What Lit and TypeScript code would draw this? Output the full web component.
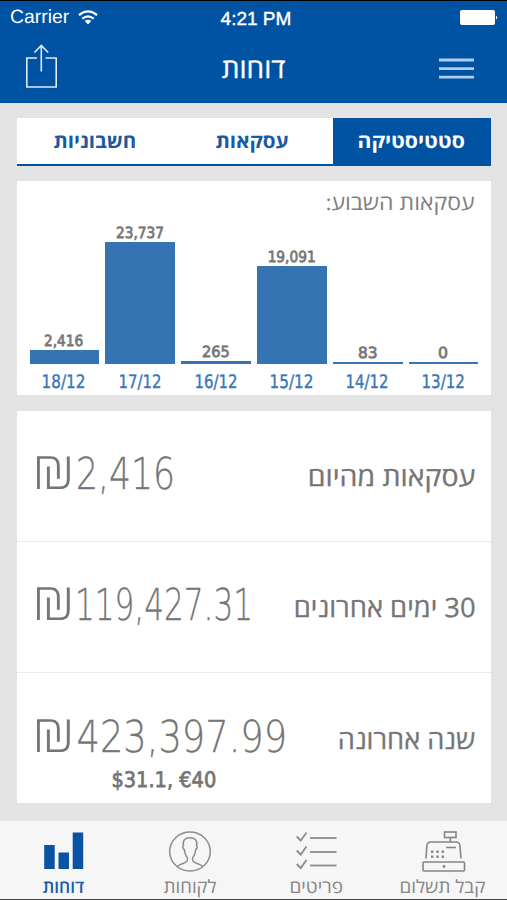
import { LitElement, html, css, svg } from "lit";
import { customElement, property } from "lit/decorators.js";
import { styleMap } from "lit/directives/style-map.js";

const pen = document.createElement("canvas").getContext("2d")!;

/** One line of text, fitted to a box that runs from the letter tops to the baseline. */
@customElement("fit-text")
class FitText extends LitElement {
  @property() text = "";
  @property() face = '"Open Sans", "Liberation Sans", sans-serif';
  @property() probe = "ה";
  @property({ type: Number }) weight = 400;
  @property({ type: Number }) w = 50;
  @property({ type: Number }) h = 12;

  static styles = css`
    :host { display: block; flex: none; direction: ltr; text-align: left; }
    .box { display: block; }
    .ink { display: inline-block; vertical-align: top; white-space: pre; transform-origin: 0 0; text-rendering: geometricPrecision; }
  `;

  render() {
    const rtl = /[\u0590-\u05ff]/.test(this.text);
    pen.direction = rtl ? "rtl" : "ltr";
    pen.textAlign = "left";
    pen.font = `${this.weight} 100px ${this.face}`;
    const size = (this.h * 100) / pen.measureText(this.probe).actualBoundingBoxAscent;
    const m = pen.measureText(this.text);
    const k = size / 100;
    const left = -m.actualBoundingBoxLeft * k;
    const ink = (m.actualBoundingBoxRight + m.actualBoundingBoxLeft) * k;
    const sx = this.w / ink;
    const base = this.h / 2 + ((m.fontBoundingBoxAscent - m.fontBoundingBoxDescent) * k) / 2;
    const box = { width: `${this.w}px`, height: `${this.h}px` };
    const inkStyle = {
      direction: rtl ? "rtl" : "ltr",
      font: `${this.weight} ${size}px/${this.h}px ${this.face}`,
      transform: `translate(${-left * sx}px, ${this.h - base}px) scaleX(${sx})`,
    };
    return html`<span class="box" style=${styleMap(box)}><span class="ink" style=${styleMap(inkStyle)}>${this.text}</span></span>`;
  }
}

const LATIN = '"Liberation Sans", sans-serif';
const NUM = '"DejaVu Sans", sans-serif';
const SHEKEL = 'Inter, "Open Sans", sans-serif';

const bars = [
  { value: "2,416", vw: 37.5, day: "18/12", dw: 41, height: 13.5 },
  { value: "23,737", vw: 46, day: "17/12", dw: 40, height: 121.5 },
  { value: "265", vw: 25.5, day: "16/12", dw: 40, height: 3 },
  { value: "19,091", vw: 45.5, day: "15/12", dw: 41, height: 98 },
  { value: "83", vw: 17.5, day: "14/12", dw: 40, height: 1.6 },
  { value: "0", vw: 8, day: "13/12", dw: 40.5, height: 1.6 },
];

const totals = [
  { amount: "2,416", aw: 94, label: "עסקאות מהיום", lw: 164.5, extra: "" },
  { amount: "119,427.31", aw: 171.5, label: "30 ימים אחרונים", lw: 178.5, extra: "" },
  { amount: "423,397.99", aw: 206, label: "שנה אחרונה", lw: 134.5, extra: "$31.1, €40" },
];

const chartIcon = svg`<g fill="#0a52a3"><rect x="2.200" y="13" width="10.5" height="24"/><rect x="16.500" y="20.5" width="10.5" height="16.5"/><rect x="30.700" y="0.5" width="10.5" height="36.5"/></g>`;
const personIcon = svg`<g fill="none" stroke="#8d8d8d" stroke-width="1.5"><ellipse cx="21" cy="19.500" rx="20.300" ry="19.500"/>
  <path d="M8.5 34.500C9.5 32 17 32 18.300 28.500C18.900 27 18.600 25.500 17.300 24C15.800 22 15.700 19.500 15.300 17.500C13.600 16.700 13.400 14.500 14.400 13.700C13.400 8.500 16 5.800 21 5.800S28.600 8.500 27.600 13.700C28.600 14.500 28.400 16.700 26.700 17.500C26.300 19.500 26.200 22 24.700 24C23.400 25.500 23.100 27 23.700 28.500C25 32 32.500 32 33.500 34.500"/></g>`;
const listIcon = svg`<g fill="none" stroke="#8d8d8d" stroke-width="1.8">
  ${[0, 14, 27.5].map((y) => svg`<path d=${`M1.700 ${y + 4.5}L5.700 ${y + 8.5}L11.500 ${y + 0.5}`}/><path d=${`M15 ${y + 6}H41.500`}/>`)}</g>`;
const tillIcon = svg`<g fill="none" stroke="#858585" stroke-width="1.6"><rect x="22.500" y="0" width="11.500" height="5.500"/><path d="M28.300 5.500V9.800"/>
  <path d="M4 26.500L4.800 14Q5.200 10 9 10H34Q37.600 10 38 14L39 26.500"/><rect x="1" y="30" width="41.500" height="9" rx="1"/><path d="M24 15.500H34"/></g>
  <g fill="#858585">${[18.500, 23.500].map((y) => [9, 14.300, 19.600].map((x) => svg`<rect x=${x} y=${y} width="2.400" height="2.400"/>`))}<circle cx="22" cy="34.500" r="1.400"/></g>`;

const nav = [
  { label: "דוחות", lw: 41, icon: chartIcon, active: true },
  { label: "לקוחות", lw: 52, icon: personIcon, active: false },
  { label: "פריטים", lw: 51, icon: listIcon, active: false },
  { label: "קבל תשלום", lw: 84, icon: tillIcon, active: false },
];

@customElement("app-root")
class AppRoot extends LitElement {
  static styles = css`
    * { box-sizing: border-box; }
    :host { display: flex; flex-direction: column; width: 507px; height: 900px; overflow: hidden; background: #e3e3e3; color: #757575; }
    svg { display: block; flex: none; overflow: visible; }
    .head { height: 102.5px; flex: none; background: #0052a2; border-top: 1.5px solid #000; color: #fff; }
    .status { display: grid; grid-template-columns: 1fr auto 1fr; height: 24px; padding: 8px 9px 0 11px; align-items: start; }
    .carrier { display: flex; gap: 9px; align-items: start; }
    .carrier fit-text { margin-top: 2px; }
    .carrier svg { margin-top: 1px; }
    .clock { margin-top: 2.500px; -webkit-text-stroke: 0.4px #fff; margin-right: -1px; }
    .battery { justify-self: end; margin-top: 0.5px; }
    .bar { display: flex; justify-content: space-between; align-items: flex-start; padding: 18px 33px 0 25px; }
    .bar .share { margin-top: 1px; }
    .bar .title { margin: 18.500px 0 0 10px; -webkit-text-stroke: 0.3px #fff; }
    .bar .menu { margin-top: 14.500px; }
    .tabs { display: grid; grid-template-columns: 158px 158px 158px; height: 47.5px; margin: 15.5px 16px 0 17px; flex: none; background: #fff; border-bottom: 2.5px solid #0052a2; color: #1a5aa3; }
    .tab { display: flex; justify-content: center; padding: 18px 3.500px 0 0; }
    .tab.on { background: #0052a2; color: #fff; padding-right: 1px; }
    .card { margin: 15.5px 16px 0 17px; flex: none; background: #fff; }
    .chart { height: 214px; padding: 16px 12.500px 0; display: flex; flex-direction: column; }
    .chart .caption { align-self: flex-end; margin-right: 4.500px; color: #808080; }
    .bars { display: grid; grid-template-columns: repeat(6, 69.500px); column-gap: 6.400px; height: 153px; align-items: end; }
    .col { display: flex; flex-direction: column; align-items: center; color: #777; -webkit-text-stroke: 0.8px #777; }
    .col fit-text, .days fit-text { margin-right: 1px; }
    .fill { width: 100%; margin-top: 2.500px; background: #3474b3; }
    .days { display: grid; grid-template-columns: repeat(6, 69.500px); column-gap: 6.400px; justify-items: center; margin-top: 11.500px; color: #3776b8; -webkit-text-stroke: 0.4px #3776b8; }
    .totals { height: 392.500px; margin-bottom: 18px; }
    .row { display: flex; justify-content: space-between; align-items: flex-start; height: 131.300px; padding: 46.500px 17px 0 20px; border-bottom: 1px solid #ebebeb; }
    .row:last-child { border: 0; }
    .row .name { margin-top: 13px; -webkit-text-stroke: 0.3px #757575; }
    .sum { display: flex; flex-direction: column; align-items: flex-start; }
    .money { display: flex; gap: 7.500px; -webkit-text-stroke: 0.3px #757575; }
    .money .sign { -webkit-text-stroke: 0; }
    .extra { margin: 19.500px 0 0 76px; -webkit-text-stroke: 0.8px #757575; }
    .nav { flex: 1; display: grid; grid-template-columns: repeat(4, 126.500px); background: #f6f6f6; border-bottom: 1.500px solid #444; color: #858585; }
    .item { display: flex; flex-direction: column; align-items: center; gap: 9.500px; padding-top: 11px; }
    .item.on { color: #1a5cab; }
  `;

  render() {
    return html`
      <div class="head">
        <div class="status">
          <div class="carrier">
            <fit-text text="Carrier" .face=${LATIN} probe="C" w="58" h="13.5"></fit-text>
            <svg width="20" height="15" viewBox="0 0 20 15"><g fill="none" stroke="#fff" stroke-width="2.300"><path d="M1 5.200Q10 -2.400 19 5.200"/><path d="M4.300 8.700Q10 4 15.700 8.700"/></g><path d="M6.700 11Q10 8.300 13.300 11L10 14.500Z" fill="#fff"/></svg>
          </div>
          <fit-text class="clock" text="4:21 PM" .face=${LATIN} probe="P" w="69" h="13"></fit-text>
          <svg class="battery" width="38" height="15" viewBox="0 0 38 15"><rect width="35" height="15" rx="2" fill="#fff"/><path d="M36 5.500Q38.500 7.500 36 9.500Z" fill="#fff"/></svg>
        </div>
        <div class="bar">
          <svg class="share" width="32" height="45" viewBox="0 0 32 45"><g fill="none" stroke="#dfeafa" stroke-width="1.600"><path d="M12 14H1.800V43H31.200V14H20.500"/><path d="M16.300 27.500V2M9.500 8.500L16.300 1.500L23.200 8.500"/></g></svg>
          <fit-text class="title" text="דוחות" w="63" h="17.5"></fit-text>
          <svg class="menu" width="35" height="22" viewBox="0 0 35 22"><path d="M0 2H35M0 10.600H35M0 19.200H35" stroke="#b3cdf0" stroke-width="2.800"/></svg>
        </div>
      </div>
      <div class="tabs">
        <div class="tab"><fit-text text="חשבוניות" weight="700" w="81" h="12.5"></fit-text></div>
        <div class="tab"><fit-text text="עסקאות" weight="700" w="72" h="12.5"></fit-text></div>
        <div class="tab on"><fit-text text="סטטיסטיקה" weight="700" w="105" h="12.5"></fit-text></div>
      </div>
      <div class="card chart">
        <fit-text class="caption" text="עסקאות השבוע:" w="147" h="13.5"></fit-text>
        <div class="bars">
          ${bars.map((b) => html`<div class="col"><fit-text text=${b.value} .face=${NUM} probe="0" w=${b.vw} h="11.500"></fit-text><div class="fill" style=${styleMap({ height: b.height + "px" })}></div></div>`)}
        </div>
        <div class="days">${bars.map((b) => html`<fit-text text=${b.day} .face=${NUM} probe="0" w=${b.dw} h="14"></fit-text>`)}</div>
      </div>
      <div class="card totals">
        ${totals.map((t) => html`<div class="row">
          <div class="sum">
            <div class="money">
              <fit-text class="sign" text="₪" .face=${SHEKEL} probe="₪" weight="200" w="33" h="33"></fit-text>
              <fit-text text=${t.amount} .face=${NUM} probe="0" weight="200" w=${t.aw} h="33"></fit-text>
            </div>
            ${t.extra ? html`<fit-text class="extra" text=${t.extra} .face=${NUM} probe="0" w="102" h="16"></fit-text>` : ""}
          </div>
          <fit-text class="name" text=${t.label} w=${t.lw} h="17"></fit-text>
        </div>`)}
      </div>
      <div class="nav">
        ${nav.map((n) => html`<div class="item ${n.active ? "on" : ""}"><svg width="42" height="41" viewBox="0 0 42 41">${n.icon}</svg><fit-text text=${n.label} weight=${n.active ? 600 : 400} w=${n.lw} h="11.5"></fit-text></div>`)}
      </div>
    `;
  }
}
